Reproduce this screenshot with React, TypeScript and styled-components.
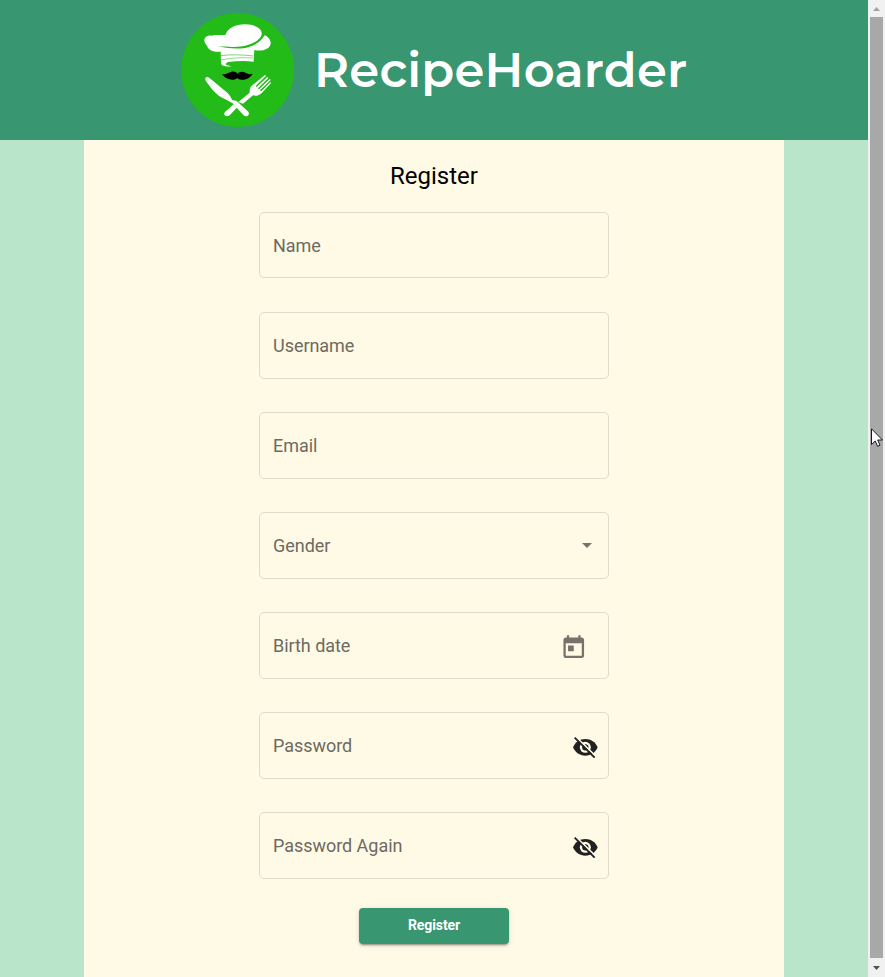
import React from 'react';
import styled, { createGlobalStyle } from 'styled-components';
import { MdToday } from 'react-icons/md';

const GlobalStyle = createGlobalStyle`
  * { box-sizing: border-box; }
  html, body { margin: 0; padding: 0; overflow: hidden; }
  body { font-family: Roboto, "Liberation Sans", sans-serif; }
`;

const Screen = styled.div`
  position: relative;
  display: flex;
  width: 885px;
  height: 977px;
  overflow: hidden;
`;

const Page = styled.div`
  width: 868px;
  height: 100%;
  display: flex;
  flex-direction: column;
  background: #b9e5cb;
`;

const Header = styled.header`
  flex: none;
  height: 140px;
  padding-left: 181px;
  display: flex;
  align-items: center;
  background: #389670;
`;

const LogoSvg = styled.svg`
  flex: none;
  width: 114px;
  height: 114px;
`;

const Brand = styled.h1`
  margin: 0 0 0 19px;
  color: #fff;
  font: 600 48px/60px Montserrat, Inter, sans-serif;
  letter-spacing: 0.22px;
  white-space: nowrap;
`;

const Content = styled.main`
  flex: 1;
  width: 700px;
  margin: 0 auto;
  display: flex;
  flex-direction: column;
  align-items: center;
  background: #fffae6;
`;

const Title = styled.h2`
  margin: 20px 0 20px;
  font-size: 24px;
  line-height: 32px;
  font-weight: 400;
  color: #000;
`;

const Form = styled.form`
  display: flex;
  flex-direction: column;
  align-items: center;
`;

const Field = styled.div<{ $inset: number }>`
  width: 350px;
  height: 67px;
  margin-bottom: 33px;
  padding: 0 ${(p) => p.$inset}px 0 13px;
  display: flex;
  align-items: center;
  justify-content: space-between;
  border: 1px solid #e0dcca;
  border-radius: 5px;

  &:first-child {
    height: 66px;
    margin-bottom: 34px;
    padding-top: 2px;
  }
`;

const Label = styled.label`
  font-size: 18px;
  line-height: 20px;
  letter-spacing: -0.04px;
  color: #6d6a61;
`;

const Caret = styled.span`
  border: 5px solid transparent;
  border-top-color: #75736a;
  border-bottom: 0;
`;

const CalendarIcon = styled(MdToday)`
  width: 27.5px;
  height: 27.5px;
  margin-top: 4px;
  color: #75736a;
`;

const EyeOffSvg = styled.svg`
  width: 25px;
  height: 21px;
  margin-top: 4px;
`;

const SubmitButton = styled.button`
  width: 150px;
  height: 36px;
  margin-top: -4px;
  padding: 0 0 2px;
  border: 0;
  border-radius: 4px;
  background: #389670;
  color: #fff;
  font: 700 14px/34px Roboto, sans-serif;
  letter-spacing: -0.1px;
  box-shadow: 0 3px 1px -2px rgba(0, 0, 0, 0.2), 0 2px 2px rgba(0, 0, 0, 0.14),
    0 1px 5px rgba(0, 0, 0, 0.12);
`;

const Scrollbar = styled.div`
  width: 17px;
  height: 100%;
  display: flex;
  flex-direction: column;
  align-items: center;
  background: #f1f1f1;
`;

const ScrollArrow = styled.svg`
  flex: none;
  width: 17px;
  height: 17px;
`;

const Thumb = styled.div`
  width: 13px;
  height: 941px;
  background: #a8a8a8;
`;

const Cursor = styled.svg`
  position: absolute;
  left: 871px;
  top: 428px;
  width: 12px;
  height: 19px;
`;

function Logo() {
  return (
    <LogoSvg viewBox="15 21 342 342">
      <ellipse cx="185" cy="192" rx="169.5" ry="171" fill="#22bb18" />
      <g fill="#fff">
        <path d="M85 103C85 93 95 88 107 89C120 86 133 88 148 87C156 66 178 55 207 55C238 55 259 68 257 84C256 100 228 117 200 121C175 125 145 122 125 121C145 126 180 130 208 126C236 120 256 106 266 88C277 92 285 103 284 113C281 130 258 137 235 132L233 167C207 163 182 165 157 168C151 170 148 173 151 177L166 181C151 183 134 179 135 170L134 137C112 139 98 133 93 119C88 114 85 109 85 103Z" />
        <path d="M89 215C94 210 99 214 105 220L144 252C160 264 165 273 168 282L182 285L217 317C223 327 211 336 202 327L170 292C160 286 151 281 140 276C122 267 106 248 99 237C92 228 85 220 89 215Z" />
        <path d="M147 318L174 294L184 304L164 325C155 336 139 329 147 318Z" />
        <path d="M187 288L221 260C220 247 225 240 233 235L267 207L270 210L239 240L242 243L274 213L277 216L246 247L249 250L281 219L284 222L252 253L256 256L283 228L285 231L258 260C248 269 240 271 231 268L201 293Z" />
      </g>
      <g fill="none" stroke="#22bb18">
        <path d="M134 149C165 145 200 146 232 150" strokeWidth="1.8" />
        <path d="M134 162C165 155 200 154 232 156" strokeWidth="1.5" />
      </g>
      <path
        d="M138 204C149 207 156 199 167 197C176 196 181 198 184 203C188 197 199 195 206 199C214 204 220 206 230 203C222 217 208 222 196 221C190 221 187 219 184 216C179 222 167 223 158 219C149 217 143 211 138 204Z"
        fill="#000"
      />
    </LogoSvg>
  );
}

/* Filled eye with a pale iris ring, crossed by a diagonal slash. */
function EyeOff() {
  return (
    <EyeOffSvg viewBox="0 0 75 63">
      <path
        d="M0 31C7 15 20 6 37 6S67 15 74 31C67 47 54 56 37 56S7 47 0 31Z"
        fill="#212121"
      />
      <circle cx="37" cy="31" r="16.5" fill="#fffae6" />
      <circle cx="37" cy="31" r="9.5" fill="#212121" />
      <path d="M9 0L72 61" stroke="#fffae6" strokeWidth="5" />
      <path d="M5 2L65 62" stroke="#212121" strokeWidth="5.5" />
    </EyeOffSvg>
  );
}

type FieldKind = 'text' | 'select' | 'date' | 'password';

const fields: { label: string; kind: FieldKind }[] = [
  { label: 'Name', kind: 'text' },
  { label: 'Username', kind: 'text' },
  { label: 'Email', kind: 'text' },
  { label: 'Gender', kind: 'select' },
  { label: 'Birth date', kind: 'date' },
  { label: 'Password', kind: 'password' },
  { label: 'Password Again', kind: 'password' },
];

const insets: Record<FieldKind, number> = { text: 13, select: 16, date: 21, password: 10 };

export default function App() {
  return (
    <>
      <GlobalStyle />
      <Screen>
        <Page>
          <Header>
            <Logo />
            <Brand>RecipeHoarder</Brand>
          </Header>
          <Content>
            <Title>Register</Title>
            <Form>
              {fields.map(({ label, kind }) => (
                <Field key={label} $inset={insets[kind]}>
                  <Label>{label}</Label>
                  {kind === 'select' && <Caret />}
                  {kind === 'date' && <CalendarIcon />}
                  {kind === 'password' && <EyeOff />}
                </Field>
              ))}
              <SubmitButton type="button">Register</SubmitButton>
            </Form>
          </Content>
        </Page>
        <Scrollbar>
          <ScrollArrow viewBox="0 0 17 17">
            <path d="M5 11L8.5 7L12 11Z" fill="#a3a3a3" />
          </ScrollArrow>
          <Thumb />
          <ScrollArrow viewBox="0 0 17 17">
            <path d="M5 8L8.5 12L12 8Z" fill="#505050" />
          </ScrollArrow>
        </Scrollbar>
        <Cursor viewBox="0 0 12 19">
          <path
            d="M.5 .8V16.5L4.2 13L6.6 18.3L9 17.2L6.7 12H11.5Z"
            fill="#fff"
            stroke="#111827"
          />
        </Cursor>
      </Screen>
    </>
  );
}
